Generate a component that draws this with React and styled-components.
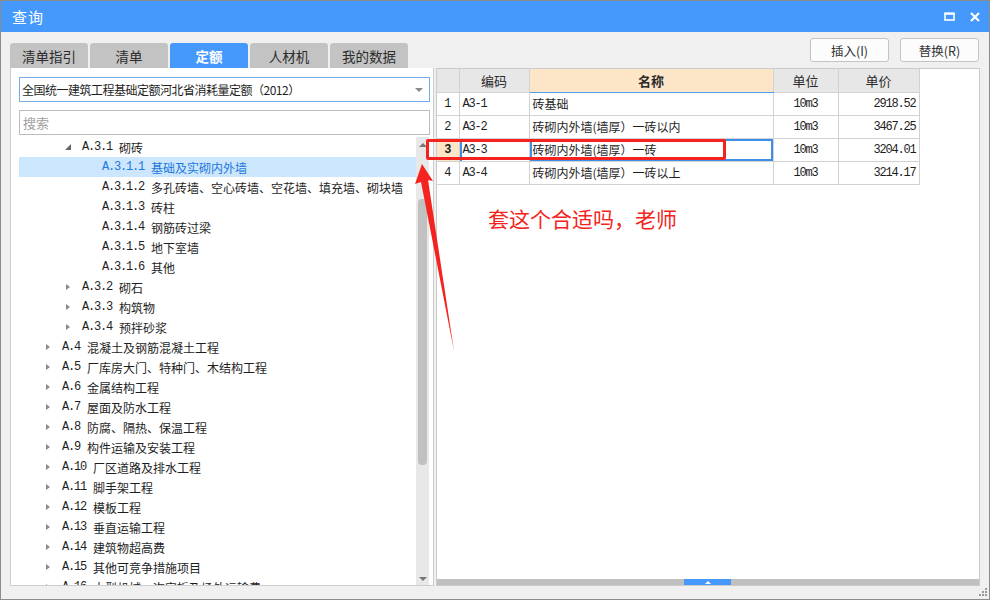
import React from "react";
import styled, { createGlobalStyle } from "styled-components";

const CJK = `"Noto Sans CJK SC", "Microsoft YaHei", sans-serif`;
const MONO = `"Liberation Mono", "Noto Sans CJK SC", monospace`;
const BLUE = "#4699fc";

const GlobalStyle = createGlobalStyle`
  html, body {
    margin: 0;
    padding: 0;
    background: #f0f0f0;
  }
  * {
    box-sizing: border-box;
  }
`;

const Window = styled.div`
  position: relative;
  width: 990px;
  height: 600px;
  background: #f0f0f0;
  border: 1px solid #8c8c8c;
  display: flex;
  flex-direction: column;
  font-family: ${CJK};
  overflow: hidden;
`;

const TitleBar = styled.div`
  height: 31px;
  flex: none;
  background: ${BLUE};
  color: #fff;
  display: flex;
  align-items: center;
  justify-content: space-between;
  padding: 0 9px 0 11px;
`;

const Title = styled.span`
  font-size: 15px;
  letter-spacing: 1px;
`;

const TitleButtons = styled.div`
  display: flex;
  align-items: center;
  gap: 15px;
`;

const Toolbar = styled.div`
  height: 36px;
  flex: none;
  display: flex;
  justify-content: space-between;
  align-items: flex-start;
  padding: 0 10px 0 9px;
`;

const Tabs = styled.div`
  display: flex;
  gap: 2px;
  margin-top: 11px;
`;

const Tab = styled.div`
  width: 78px;
  height: 25px;
  border-radius: 3px 3px 0 0;
  background: ${(p) => (p.$active ? BLUE : "#c3c3c3")};
  color: ${(p) => (p.$active ? "#fff" : "#2b2b2b")};
  font-weight: ${(p) => (p.$active ? 700 : 400)};
  font-size: 13.5px;
  display: flex;
  align-items: center;
  justify-content: center;
`;

const Actions = styled.div`
  display: flex;
  gap: 11px;
  margin-top: 6px;
`;

const Button = styled.button`
  width: 79px;
  height: 24px;
  border: 1px solid #c4c4c4;
  border-radius: 3px;
  background: #fcfcfc;
  font-family: ${CJK};
  font-size: 12.5px;
  color: #333;
  padding: 0;
`;

const Main = styled.div`
  flex: 1;
  min-height: 0;
  display: flex;
  gap: 2px;
  padding: 0 9px;
`;

const LeftPanel = styled.div`
  width: 424px;
  background: #fff;
  border: 1px solid #cdcdcd;
  border-top: none;
  display: flex;
  flex-direction: column;
  padding: 9px 0 0 8px;
`;

const Select = styled.div`
  width: 411px;
  height: 25px;
  border: 1px solid #76ace6;
  display: flex;
  align-items: center;
  justify-content: space-between;
  padding: 0 6px 0 2px;
  font-size: 12px;
  letter-spacing: -0.5px;
  color: #1e1e1e;
`;

const Caret = styled.span`
  width: 0;
  height: 0;
  border-left: 4px solid transparent;
  border-right: 4px solid transparent;
  border-top: 4px solid #888;
`;

const Search = styled.div`
  width: 411px;
  height: 25px;
  margin-top: 8px;
  border: 1px solid #bdbdbd;
  display: flex;
  align-items: center;
  padding-left: 3px;
  font-size: 13px;
  color: #a0a0a0;
`;

const TreeArea = styled.div`
  flex: 1;
  min-height: 0;
  margin-top: 2px;
  display: flex;
`;

const TreeList = styled.div`
  flex: 1;
  overflow: hidden;
`;

const Row = styled.div`
  height: 20px;
  display: flex;
  align-items: center;
  white-space: nowrap;
  padding-left: ${(p) => 27 + (p.$level - 1) * 20}px;
  background: ${(p) => (p.$selected ? "#cce7fd" : "transparent")};
  color: ${(p) => (p.$selected ? "#1d76dc" : "#1e1e1e")};
`;

const Toggle = styled.span`
  width: 16px;
  flex: none;
  display: flex;
  align-items: center;
`;

const Collapsed = styled.span`
  width: 0;
  height: 0;
  border-top: 3.5px solid transparent;
  border-bottom: 3.5px solid transparent;
  border-left: 4px solid #8a8a8a;
`;

const Expanded = styled.span`
  width: 0;
  height: 0;
  margin-left: -1px;
  border-style: solid;
  border-width: 0 0 6px 6px;
  border-color: transparent transparent #666 transparent;
`;

const Code = styled.span`
  font-family: ${MONO};
  font-size: 12px;
  letter-spacing: -1.2px;
  margin-right: 7px;
`;

const Name = styled.span`
  font-size: 12px;
`;

const VScroll = styled.div`
  width: 13px;
  margin-right: 4px;
  background: #e8e8e8;
  display: flex;
  flex-direction: column;
  align-items: center;
`;

const ArrowUp = styled.span`
  margin-top: 6px;
  width: 0;
  height: 0;
  border-left: 4px solid transparent;
  border-right: 4px solid transparent;
  border-bottom: 4px solid #777;
`;

const ArrowDown = styled.span`
  margin-top: auto;
  margin-bottom: 4px;
  width: 0;
  height: 0;
  border-left: 4px solid transparent;
  border-right: 4px solid transparent;
  border-top: 4px solid #777;
`;

const Thumb = styled.div`
  width: 9px;
  height: ${(p) => p.$size}px;
  margin-top: ${(p) => p.$offset}px;
  border-radius: 4px;
  background: #c1c1c1;
`;

const RightPanel = styled.div`
  flex: 1;
  background: #fff;
  border: 1px solid #cbcbcb;
  display: flex;
  flex-direction: column;
`;

const Grid = styled.table`
  border-collapse: collapse;
  table-layout: fixed;
  width: 482px;
  font-size: 12px;
  color: #1e1e1e;
`;

const Th = styled.th`
  height: 23px;
  padding: 0;
  border: 1px solid #d2d2d2;
  border-top: none;
  background: ${(p) => (p.$focus ? "#fde6c8" : "#e7e7e7")};
  border-bottom: 1px solid ${(p) => (p.$focus ? "#4b9ff0" : "#d2d2d2")};
  font-weight: ${(p) => (p.$focus ? 700 : 400)};
  font-size: 13px;
  color: #2a2a2a;
  &:first-child {
    border-left: none;
  }
`;

const Td = styled.td`
  height: 23px;
  padding: 0 3px;
  border: 1px solid #d2d2d2;
  text-align: ${(p) => p.$align || "left"};
  font-family: ${(p) => (p.$mono ? MONO : CJK)};
  font-size: 12px;
  letter-spacing: ${(p) => (p.$mono ? "-1.2px" : "0")};
  white-space: nowrap;
  &:first-child {
    border-left: none;
  }
`;

const RowNum = styled(Td)`
  padding: 0;
  text-align: center;
  letter-spacing: 0;
  background: ${(p) => (p.$current ? "#fde6c8" : "#fff")};
  font-weight: ${(p) => (p.$current ? 700 : 400)};
`;

const FocusCell = styled(Td)`
  box-shadow: inset 0 0 0 2px #3d8fea;
`;

const MarkedCell = styled(Td)`
  box-shadow: inset 2px 0 0 #3d8fea;
`;

const Filler = styled.div`
  flex: 1;
`;

const HScroll = styled.div`
  height: 6px;
  background: #c0c0c0;
  display: flex;
`;

const HThumb = styled.div`
  width: 47px;
  margin-left: 247px;
  background: ${BLUE};
  display: flex;
  align-items: center;
  justify-content: center;
  &::after {
    content: "";
    width: 0;
    height: 0;
    border-left: 3px solid transparent;
    border-right: 3px solid transparent;
    border-bottom: 3px solid #fff;
  }
`;

const Footer = styled.div`
  height: 13px;
  flex: none;
  display: flex;
  justify-content: flex-end;
  align-items: flex-end;
  padding: 0 2px 3px 0;
`;

const Overlay = styled.div`
  position: absolute;
  inset: 0;
  pointer-events: none;
`;

const MarkBox = styled.div`
  position: absolute;
  left: 425px;
  top: 138px;
  width: 300px;
  height: 21px;
  border: 3px solid #f5231f;
  border-radius: 2px;
`;

const Note = styled.div`
  position: absolute;
  left: 487px;
  top: 202px;
  font-size: 21px;
  color: #f4241c;
  white-space: nowrap;
`;

const ArrowSvg = styled.svg`
  position: absolute;
  left: 0;
  top: 0;
`;

const tree = [
  { level: 2, code: "A.3.1", name: "砌砖", open: true },
  { level: 3, code: "A.3.1.1", name: "基础及实砌内外墙", selected: true, leaf: true },
  { level: 3, code: "A.3.1.2", name: "多孔砖墙、空心砖墙、空花墙、填充墙、砌块墙", leaf: true },
  { level: 3, code: "A.3.1.3", name: "砖柱", leaf: true },
  { level: 3, code: "A.3.1.4", name: "钢筋砖过梁", leaf: true },
  { level: 3, code: "A.3.1.5", name: "地下室墙", leaf: true },
  { level: 3, code: "A.3.1.6", name: "其他", leaf: true },
  { level: 2, code: "A.3.2", name: "砌石" },
  { level: 2, code: "A.3.3", name: "构筑物" },
  { level: 2, code: "A.3.4", name: "预拌砂浆" },
  { level: 1, code: "A.4", name: "混凝土及钢筋混凝土工程" },
  { level: 1, code: "A.5", name: "厂库房大门、特种门、木结构工程" },
  { level: 1, code: "A.6", name: "金属结构工程" },
  { level: 1, code: "A.7", name: "屋面及防水工程" },
  { level: 1, code: "A.8", name: "防腐、隔热、保温工程" },
  { level: 1, code: "A.9", name: "构件运输及安装工程" },
  { level: 1, code: "A.10", name: "厂区道路及排水工程" },
  { level: 1, code: "A.11", name: "脚手架工程" },
  { level: 1, code: "A.12", name: "模板工程" },
  { level: 1, code: "A.13", name: "垂直运输工程" },
  { level: 1, code: "A.14", name: "建筑物超高费" },
  { level: 1, code: "A.15", name: "其他可竞争措施项目" },
  { level: 1, code: "A.16", name: "大型机械一次安拆及场外运输费" },
];

const items = [
  { code: "A3-1", name: "砖基础", unit: "10m3", price: "2918.52" },
  { code: "A3-2", name: "砖砌内外墙(墙厚）一砖以内", unit: "10m3", price: "3467.25" },
  { code: "A3-3", name: "砖砌内外墙(墙厚）一砖", unit: "10m3", price: "3204.01", current: true },
  { code: "A3-4", name: "砖砌内外墙(墙厚）一砖以上", unit: "10m3", price: "3214.17" },
];

const tabs = ["清单指引", "清单", "定额", "人材机", "我的数据"];

const MaxIcon = () => (
  <svg width="11" height="9" viewBox="0 0 11 9">
    <rect x="1" y="1.5" width="9" height="6.5" fill="none" stroke="#fff" strokeWidth="1.6" />
    <rect x="0.5" y="0.5" width="10" height="2.2" fill="#fff" />
  </svg>
);

const CloseIcon = () => (
  <svg width="10" height="10" viewBox="0 0 10 10">
    <path d="M1 1 L9 9 M9 1 L1 9" stroke="#fff" strokeWidth="2.2" />
  </svg>
);

const Grip = () => (
  <svg width="8" height="8" viewBox="0 0 8 8">
    <g fill="#9a9a9a">
      <rect x="6" y="0" width="2" height="2" />
      <rect x="3" y="3" width="2" height="2" />
      <rect x="6" y="3" width="2" height="2" />
      <rect x="0" y="6" width="2" height="2" />
      <rect x="3" y="6" width="2" height="2" />
      <rect x="6" y="6" width="2" height="2" />
    </g>
  </svg>
);

const TreeRow = ({ item }) => (
  <Row $level={item.level} $selected={item.selected}>
    <Toggle>{item.leaf ? null : item.open ? <Expanded /> : <Collapsed />}</Toggle>
    <Code>{item.code}</Code>
    <Name>{item.name}</Name>
  </Row>
);

const App = () => {
  return (
    <>
      <GlobalStyle />
      <Window>
        <TitleBar>
          <Title>查询</Title>
          <TitleButtons>
            <MaxIcon />
            <CloseIcon />
          </TitleButtons>
        </TitleBar>

        <Toolbar>
          <Tabs>
            {tabs.map((t) => (
              <Tab key={t} $active={t === "定额"}>
                {t}
              </Tab>
            ))}
          </Tabs>
          <Actions>
            <Button>插入(I)</Button>
            <Button>替换(R)</Button>
          </Actions>
        </Toolbar>

        <Main>
          <LeftPanel>
            <Select>
              <span>全国统一建筑工程基础定额河北省消耗量定额（2012）</span>
              <Caret />
            </Select>
            <Search>搜索</Search>
            <TreeArea>
              <TreeList>
                {tree.map((item) => (
                  <TreeRow key={item.code} item={item} />
                ))}
              </TreeList>
              <VScroll>
                <ArrowUp />
                <Thumb $offset={52} $size={266} />
                <ArrowDown />
              </VScroll>
            </TreeArea>
          </LeftPanel>

          <RightPanel>
            <Grid>
              <colgroup>
                <col style={{ width: 22 }} />
                <col style={{ width: 70 }} />
                <col style={{ width: 244 }} />
                <col style={{ width: 65 }} />
                <col style={{ width: 81 }} />
              </colgroup>
              <thead>
                <tr>
                  <Th />
                  <Th>编码</Th>
                  <Th $focus>名称</Th>
                  <Th>单位</Th>
                  <Th>单价</Th>
                </tr>
              </thead>
              <tbody>
                {items.map((it, i) => {
                  const CodeCell = it.current ? MarkedCell : Td;
                  const NameCell = it.current ? FocusCell : Td;
                  return (
                    <tr key={it.code}>
                      <RowNum $mono $current={it.current}>
                        {i + 1}
                      </RowNum>
                      <CodeCell $mono>{it.code}</CodeCell>
                      <NameCell>{it.name}</NameCell>
                      <Td $mono $align="center">
                        {it.unit}
                      </Td>
                      <Td $mono $align="right">
                        {it.price}
                      </Td>
                    </tr>
                  );
                })}
              </tbody>
            </Grid>
            <Filler />
            <HScroll>
              <HThumb />
            </HScroll>
          </RightPanel>
        </Main>

        <Footer>
          <Grip />
        </Footer>

        <Overlay>
          <MarkBox />
          <ArrowSvg width="990" height="600">
            <polygon
              points="421,163 414,183 420,181 453,350 427,179 432,180"
              fill="#f5231f"
            />
          </ArrowSvg>
          <Note>套这个合适吗，老师</Note>
        </Overlay>
      </Window>
    </>
  );
};

export default App;
